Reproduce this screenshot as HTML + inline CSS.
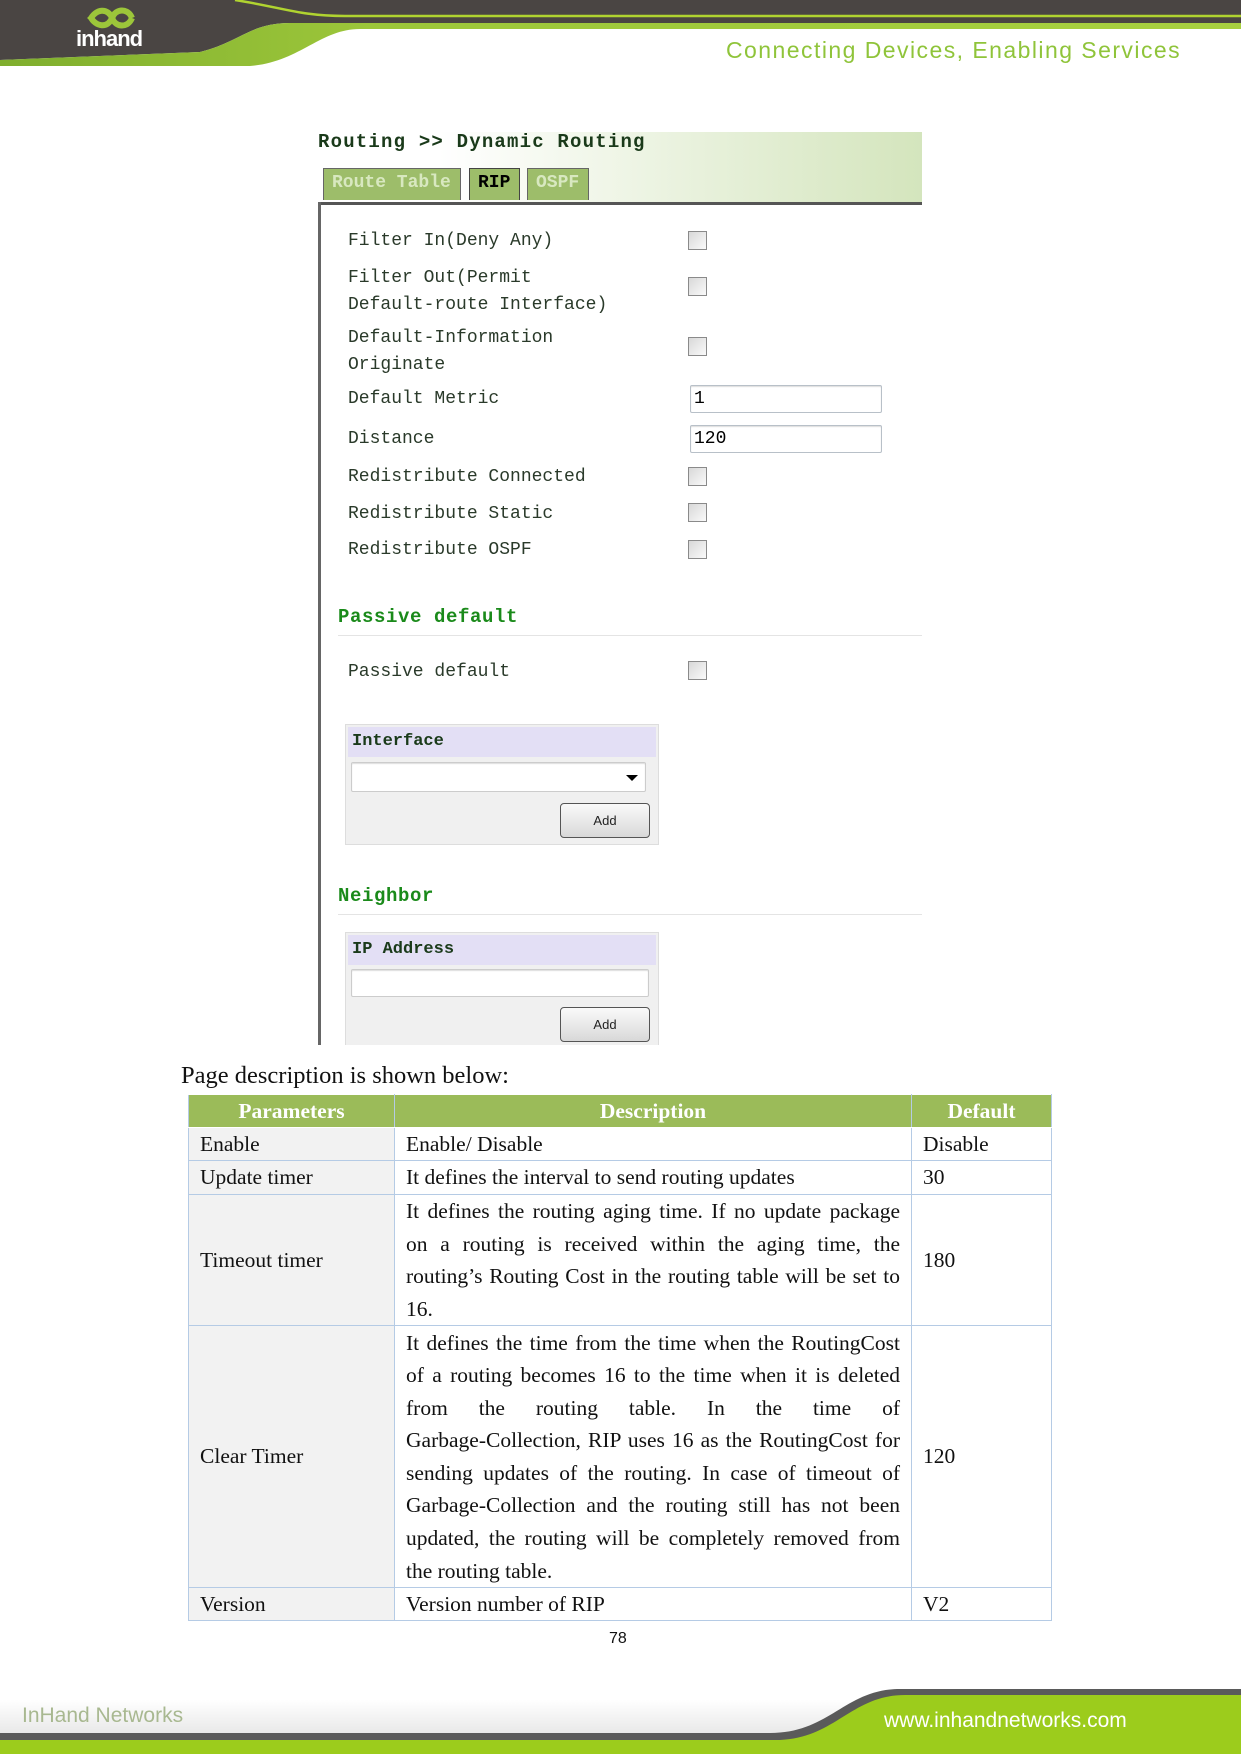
<!DOCTYPE html>
<html><head><meta charset="utf-8"><style>
*{margin:0;padding:0;box-sizing:border-box}
body{width:1241px;height:1754px;position:relative;background:#fff;overflow:hidden;font-family:"Liberation Serif",serif}
.a{position:absolute}
.mono{font-family:"Liberation Mono","Noto Sans CJK SC",monospace;font-size:18px;color:#2a3a2a;white-space:nowrap}
.cb{position:absolute;width:19px;height:19px;border:1px solid #8a8a8a;background:linear-gradient(135deg,#d8d8d8,#fafafa)}
.inp{position:absolute;border:1px solid #b8c0c8;border-radius:2px;background:#fff;box-shadow:inset 0 1px 1px #ddd}
.hd{color:#1a8a1a;font-weight:bold;font-family:"Liberation Mono",monospace;font-size:19px;letter-spacing:0.6px}
.btn{position:absolute;width:90px;height:35px;border:1px solid #555;border-radius:4px;background:linear-gradient(#fafafa,#d8d8d8);font:13px "Liberation Sans",sans-serif;text-align:center;line-height:33px;color:#222}
table{border-collapse:collapse;position:absolute;left:188px;top:1094px;width:864px;font-size:21.5px;color:#111}
td,th{border:1px solid #b5cbe5;padding:0 11px;vertical-align:middle}
th{background:#9bbb59;color:#fff;font-weight:bold;height:33px;text-align:center;border-color:#fff #b5cbe5}
td.p{background:#f2f2f2}
.j div{text-align:justify;text-align-last:justify;line-height:32.6px;white-space:nowrap}
.j div.l{text-align-last:left}
.tab{position:absolute;top:168px;height:32px;background:#9dbd6a;border:1px solid #666;border-bottom:none;font:bold 18px 'Liberation Mono',monospace;color:#d8e8c0;padding:4px 0 0 8px;white-space:nowrap}
</style></head><body>
<!-- header -->
<svg class="a" style="left:0;top:0" width="1241" height="72">
<defs><linearGradient id="g1" x1="0" y1="0" x2="1" y2="0"><stop offset="0" stop-color="#7fae2e"/><stop offset="0.3" stop-color="#9cc63a"/><stop offset="1" stop-color="#a8d040"/></linearGradient></defs>
<path d="M0 0H1241V23H290C250 23 240 42 200 52L0 60Z" fill="#4a4543"/>
<path d="M0 60L200 52C240 42 250 23 290 23H1241V29H360C320 29 300 62 250 66H0Z" fill="url(#g1)"/>
<path d="M235 0C285 8 300 16 345 16H1241" stroke="#b0d330" stroke-width="2.5" fill="none"/>
</svg>
<div class="a" style="left:76px;top:2px;width:68px;height:56px">
<svg width="68" height="56"><path d="M14 18c6-12 18-12 22 -2s16 10 20 0M14 14c6 12 18 12 22 2s16-10 20 0" stroke="#9cc63a" stroke-width="6" fill="none"/></svg>
<div class="a" style="left:0;top:24px;font:bold 22px 'Liberation Sans',sans-serif;color:#fff;letter-spacing:-1px">inhand</div>
</div>
<div class="a" style="left:726px;top:37px;font:23px 'Liberation Sans',sans-serif;color:#8fc43a;letter-spacing:1.45px;white-space:nowrap">Connecting Devices, Enabling Services</div>

<!-- screenshot -->
<div class="a" style="left:318px;top:132px;width:604px;height:73px;background:linear-gradient(90deg,#fff 20%,#d4e5bd)"></div>
<div class="a" style="left:318px;top:131px;font:bold 19px 'Liberation Mono',monospace;color:#1a3a1a;letter-spacing:1.2px">Routing &gt;&gt; Dynamic Routing</div>
<div class="tab" style="left:323px;width:138px">Route Table</div>
<div class="tab" style="left:469px;width:51px;color:#000;border-color:#444">RIP</div>
<div class="tab" style="left:527px;width:62px">OSPF</div>
<div class="a" style="left:318px;top:202px;width:604px;height:3px;background:#555"></div>
<div class="a" style="left:318px;top:202px;width:3px;height:843px;background:#666"></div>

<div class="a mono" style="left:348px;top:231px">Filter In(Deny Any)</div>
<div class="a mono" style="left:348px;top:265px;line-height:27px">Filter Out(Permit<br>Default-route Interface)</div>
<div class="a mono" style="left:348px;top:325px;line-height:27px">Default-Information<br>Originate</div>
<div class="a mono" style="left:348px;top:389px">Default Metric</div>
<div class="a mono" style="left:348px;top:429px">Distance</div>
<div class="a mono" style="left:348px;top:467px">Redistribute Connected</div>
<div class="a mono" style="left:348px;top:504px">Redistribute Static</div>
<div class="a mono" style="left:348px;top:540px">Redistribute OSPF</div>
<div class="cb" style="left:688px;top:231px"></div>
<div class="cb" style="left:688px;top:277px"></div>
<div class="cb" style="left:688px;top:337px"></div>
<div class="inp" style="left:690px;top:385px;width:192px;height:28px"><span class="mono" style="position:absolute;left:3px;top:3px;color:#000">1</span></div>
<div class="inp" style="left:690px;top:425px;width:192px;height:28px"><span class="mono" style="position:absolute;left:3px;top:3px;color:#000">120</span></div>
<div class="cb" style="left:688px;top:467px"></div>
<div class="cb" style="left:688px;top:503px"></div>
<div class="cb" style="left:688px;top:540px"></div>

<div class="a hd" style="left:338px;top:606px">Passive default</div>
<div class="a" style="left:338px;top:635px;width:584px;height:1px;background:#e4e4e4"></div>
<div class="a mono" style="left:348px;top:662px">Passive default</div>
<div class="cb" style="left:688px;top:661px"></div>

<div class="a" style="left:345px;top:724px;width:314px;height:121px;background:#f0f0f0;border:1px solid #ddd"></div>
<div class="a" style="left:348px;top:727px;width:308px;height:30px;background:#e3dff5;font:bold 17px 'Liberation Mono',monospace;color:#1a3a1a;padding:5px 4px">Interface</div>
<div class="inp" style="left:351px;top:762px;width:295px;height:30px;border-color:#ccc"></div>
<div class="a" style="left:626px;top:775px;width:0;height:0;border-left:6px solid transparent;border-right:6px solid transparent;border-top:6px solid #000"></div>
<div class="btn" style="left:560px;top:803px">Add</div>

<div class="a hd" style="left:338px;top:885px">Neighbor</div>
<div class="a" style="left:338px;top:914px;width:584px;height:1px;background:#e4e4e4"></div>
<div class="a" style="left:345px;top:932px;width:314px;height:113px;background:#f0f0f0;border:1px solid #ddd;border-bottom:none"></div>
<div class="a" style="left:348px;top:935px;width:308px;height:30px;background:#e3dff5;font:bold 17px 'Liberation Mono',monospace;color:#1a3a1a;padding:5px 4px">IP Address</div>
<div class="inp" style="left:351px;top:969px;width:298px;height:28px;border-color:#ccc"></div>
<div class="btn" style="left:560px;top:1007px">Add</div>

<div class="a" style="left:181px;top:1062px;font-size:24.5px;color:#111">Page description is shown below:</div>

<table>
<tr><th style="width:206px">Parameters</th><th style="width:517px">Description</th><th>Default</th></tr>
<tr style="height:33px"><td class="p">Enable</td><td>Enable/ Disable</td><td>Disable</td></tr>
<tr style="height:34px"><td class="p">Update timer</td><td>It defines the interval to send routing updates</td><td>30</td></tr>
<tr style="height:131px"><td class="p">Timeout timer</td><td class="j"><div>It defines the routing aging time. If no update package</div><div>on a routing is received within the aging time, the</div><div>routing’s Routing Cost in the routing table will be set to</div><div class="l">16.</div></td><td>180</td></tr>
<tr style="height:262px"><td class="p">Clear Timer</td><td class="j"><div>It defines the time from the time when the RoutingCost</div><div>of a routing becomes 16 to the time when it is deleted</div><div>from the routing table. In the time of</div><div>Garbage-Collection, RIP uses 16 as the RoutingCost for</div><div>sending updates of the routing. In case of timeout of</div><div>Garbage-Collection and the routing still has not been</div><div>updated, the routing will be completely removed from</div><div class="l">the routing table.</div></td><td>120</td></tr>
<tr style="height:33px"><td class="p">Version</td><td>Version number of RIP</td><td>V2</td></tr>
</table>

<div class="a" style="left:609px;top:1630px;font:16px 'Liberation Sans',sans-serif;color:#111">78</div>

<!-- footer -->
<svg class="a" style="left:0;top:1680px" width="1241" height="74">
<defs><linearGradient id="g2" x1="0" y1="0" x2="0" y2="1"><stop offset="0" stop-color="#fff"/><stop offset="1" stop-color="#e8e8e8"/></linearGradient></defs>
<rect x="0" y="20" width="1241" height="34" fill="url(#g2)"/>
<path d="M0 56H770C830 56 845 14 900 14H1241V74H0Z" fill="#9ccc1c"/>
<path d="M0 53H770C830 53 845 9 900 9H1241V15H905C850 15 835 60 775 60H0Z" fill="#5a5a5a"/>
</svg>
<div class="a" style="left:22px;top:1704px;font:21px 'Liberation Sans',sans-serif;color:#a8b890">InHand Networks</div>
<div class="a" style="left:884px;top:1709px;font:21px 'Liberation Sans',sans-serif;color:#fff">www.inhandnetworks.com</div>
</body></html>
